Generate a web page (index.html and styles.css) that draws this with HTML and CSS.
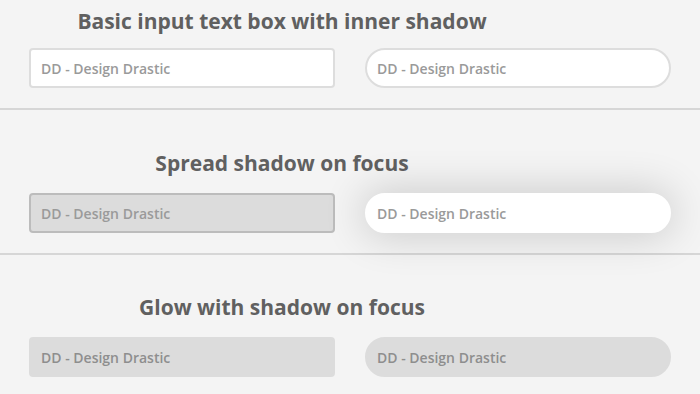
FILE: index.html
```html
<!DOCTYPE html>
<html>
<head>
<meta charset="utf-8">
<link rel="stylesheet" href="styles.css">
</head>
<body>
<section class="demo demo-first">
  <h2 class="demo-title">Basic input text box with inner shadow</h2>
  <div class="demo-row">
    <input class="field field-basic" type="text" placeholder="DD - Design Drastic">
    <input class="field field-basic field-pill" type="text" placeholder="DD - Design Drastic">
  </div>
</section>
<section class="demo demo-middle">
  <h2 class="demo-title">Spread shadow on focus</h2>
  <div class="demo-row">
    <input class="field field-spread" type="text" placeholder="DD - Design Drastic">
    <input class="field field-spread-focus field-pill" type="text" placeholder="DD - Design Drastic">
  </div>
</section>
<section class="demo demo-last">
  <h2 class="demo-title">Glow with shadow on focus</h2>
  <div class="demo-row">
    <input class="field field-glow" type="text" placeholder="DD - Design Drastic">
    <input class="field field-glow field-pill" type="text" placeholder="DD - Design Drastic">
  </div>
</section>
</body>
</html>
```
FILE: styles.css
```css
html, body {
  margin: 0;
  padding: 0;
  background: #f4f4f4;
  font-family: "Open Sans", "Liberation Sans", sans-serif;
  overflow: hidden;
}

.demo {
  padding: 37px 0 20px;
  border-bottom: 2px solid #d6d6d6;
}

.demo-first {
  padding-top: 0;
}

.demo-middle {
  padding-top: 38px;
}

.demo-last {
  border-bottom: none;
}

.demo-title {
  margin: 0 0 15px;
  padding-right: 136px;
  text-align: center;
  font-size: 21px;
  line-height: 30px;
  font-weight: 700;
  color: #606060;
}

.demo-first .demo-title {
  margin-top: 6px;
  margin-bottom: 12px;
}

.demo-row {
  display: flex;
  justify-content: center;
  gap: 30px;
}

.field {
  box-sizing: border-box;
  width: 306px;
  height: 40px;
  margin: 0;
  padding: 0 10px;
  border: 2px solid #dddddd;
  border-radius: 4px;
  background: #ffffff;
  font-family: inherit;
  font-size: 14px;
  font-weight: 600;
  color: #555;
  outline: none;
}

.field::placeholder {
  color: #9a9a9a;
  opacity: 1;
}

.field-pill {
  border-radius: 20px;
}

.field-spread {
  background: #dcdcdc;
  border-color: #bcbcbc;
}

.field-spread-focus {
  position: relative;
  z-index: 1;
  border-color: #ffffff;
  box-shadow: 0 0 40px 4px rgba(0, 0, 0, 0.16);
}

.field-glow {
  background: #dcdcdc;
  border-color: #dcdcdc;
}

.field-glow::placeholder {
  color: #8e8e8e;
}
```
